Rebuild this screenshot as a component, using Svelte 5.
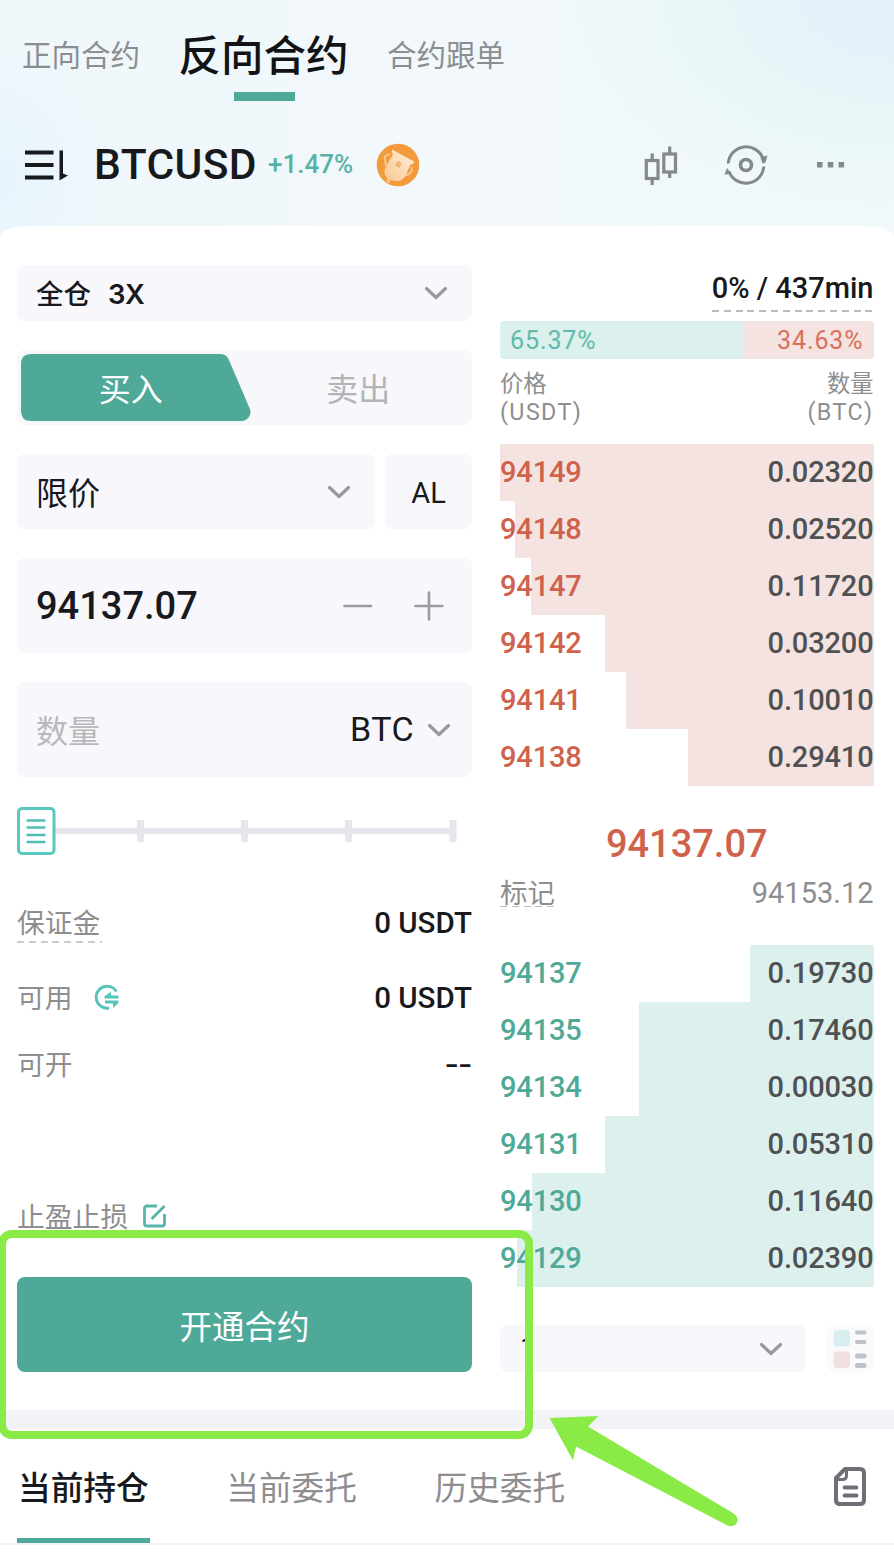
<script lang="ts">
  type Level = { price: string; amount: string; depth: number };

  // depth is the width of the volume bar, in percent of the book
  const asks: Level[] = [
    { price: '94149', amount: '0.02320', depth: 100 },
    { price: '94148', amount: '0.02520', depth: 95.9 },
    { price: '94147', amount: '0.11720', depth: 91.7 },
    { price: '94142', amount: '0.03200', depth: 71.9 },
    { price: '94141', amount: '0.10010', depth: 66.4 },
    { price: '94138', amount: '0.29410', depth: 49.7 }
  ];

  const bids: Level[] = [
    { price: '94137', amount: '0.19730', depth: 33.2 },
    { price: '94135', amount: '0.17460', depth: 62.8 },
    { price: '94134', amount: '0.00030', depth: 62.8 },
    { price: '94131', amount: '0.05310', depth: 71.9 },
    { price: '94130', amount: '0.11640', depth: 91.5 },
    { price: '94129', amount: '0.02390', depth: 95.4 }
  ];

  const markets = ['正向合约', '反向合约', '合约跟单'];
  const positionTabs = ['当前持仓', '当前委托', '历史委托'];

  let market = $state('反向合约');
  let side = $state<'buy' | 'sell'>('buy');
  let positionTab = $state('当前持仓');
</script>

{#snippet chevron()}
  <svg class="chevron" width="24" height="14" viewBox="0 0 24 14">
    <path d="M2.500 2.500 L12 11.500 L21.500 2.500" fill="none" stroke="#98989d" stroke-width="3.200" stroke-linecap="round" stroke-linejoin="round" />
  </svg>
{/snippet}

{#snippet levels(rows: Level[], kind: string)}
  <div class="levels {kind}">
    {#each rows as row (row.price)}
      <div class="level">
        <div class="depth" style="width: {row.depth}%"></div>
        <span class="price">{row.price}</span>
        <span class="amount">{row.amount}</span>
      </div>
    {/each}
  </div>
{/snippet}

<div class="app">
  <header>
    <nav class="markets">
      {#each markets as m (m)}
        <button class="market" class:active={market === m} onclick={() => (market = m)}>{m}</button>
      {/each}
    </nav>

    <div class="pair-row">
      <svg class="menu-icon" width="46" height="34" viewBox="0 0 46 34">
        <path d="M3 4.500H31.500M3 17H31.500M3 29.500H31.500" stroke="#17191c" stroke-width="3.800" />
        <path d="M37.500 2.500H41V25.500L46 27.500L37.500 32.500Z" fill="#17191c" />
      </svg>
      <span class="pair">BTCUSD</span>
      <span class="change">+1.47%</span>
      <svg class="cup" width="44" height="44" viewBox="0 0 44 44">
        <defs>
          <linearGradient id="cup-fill" x1="0" y1="1" x2="1" y2="0">
            <stop offset="0" stop-color="#f6c68e" />
            <stop offset="1" stop-color="#fff1dd" />
          </linearGradient>
        </defs>
        <circle cx="22" cy="22" r="21.300" fill="#f29b3c" />
        <path d="M14 11.500C9.500 11.500 8 14 9 17.500C9.500 19.500 10.500 20.500 9.500 23" fill="none" stroke="#f9c893" stroke-width="2" />
        <path d="M35 24C37 26 35.500 30 32 31.500C30 32.400 28.500 31.500 28 33" fill="none" stroke="#f9c893" stroke-width="2" />
        <path d="M16 6.500L38 18.500Q38 21 34.500 21.500L31 29.500C29.500 35 25 38.500 20 38L14 37L13 40.500L10.500 38.500L11.500 35C7.500 31.500 8 27 10 23.500L17 11.500Q15 9.500 16 6.500Z" fill="url(#cup-fill)" />
        <path d="M22 17.500L26 20.500L23.500 25L19 22Z" fill="#f0b578" />
      </svg>

      <div class="tools">
        <svg width="36" height="42" viewBox="0 0 36 42">
          <g fill="none" stroke="#84888b" stroke-width="3.200">
            <rect x="3.300" y="16.500" width="11.700" height="18" />
            <path d="M9.200 9.500V16.500M9.200 34.500V41" />
            <rect x="20.800" y="10" width="11.700" height="18" />
            <path d="M26.700 2.500V10M26.700 28V34" />
          </g>
        </svg>
        <svg class="cycle" width="46" height="42" viewBox="0 0 46 42">
          <g fill="none" stroke="#84888b" stroke-width="3">
            <circle cx="23" cy="21" r="5.500" stroke-width="3.600" />
            <path d="M5.200 19.500A18 18 0 0 1 40 14.500" />
            <path d="M40.800 22.500A18 18 0 0 1 6 27.500" />
          </g>
          <path d="M37.500 13.500L44.500 11.500L42.500 18.500L39.500 19.500Z" fill="#84888b" />
          <path d="M1.500 30.500L4 24L8.500 30Z" fill="#84888b" />
        </svg>
        <svg width="30" height="8" viewBox="0 0 30 8">
          <path d="M1 1H6.500V6.500H1ZM11.800 1H17.300V6.500H11.800ZM22.600 1H28.100V6.500H22.600Z" fill="#84888b" />
        </svg>
      </div>
    </div>
  </header>

  <main>
    <section class="order">
      <button class="field leverage"><span>全仓</span><span class="times">3X</span>{@render chevron()}</button>

      <div class="sides">
        <svg class="side-shape" width="231" height="67" viewBox="0 0 231 67">
          <path d="M10 0H199Q205 0 207.500 5L228.500 54Q230.500 58 228.500 62Q226 67 220 67H10Q0 67 0 57V10Q0 0 10 0Z" fill="#4fa998" />
        </svg>
        <button class="side" class:on={side === 'buy'} onclick={() => (side = 'buy')}>买入</button>
        <button class="side" class:on={side === 'sell'} onclick={() => (side = 'sell')}>卖出</button>
      </div>

      <div class="type-row">
        <button class="field type">限价{@render chevron()}</button>
        <button class="field al">AL</button>
      </div>

      <div class="field price-input">
        <span class="value">94137.07</span>
        <svg width="102" height="30" viewBox="0 0 102 30">
          <path d="M2.500 15H29M87 1.500V28.500M73.500 15H100.500" stroke="#9a9a9f" stroke-width="2.600" stroke-linecap="round" />
        </svg>
      </div>

      <div class="field amount-input">
        <span class="placeholder">数量</span>
        <span class="unit">BTC</span>
        {@render chevron()}
      </div>

      <svg class="slider" width="455" height="50" viewBox="0 0 455 50">
        <path d="M38 25H439" stroke="#e6e6ec" stroke-width="6.500" />
        <path d="M123.500 14V36M227.500 14V36M331.500 14V36M436 14V36" stroke="#e6e6ec" stroke-width="7" />
        <rect x="1.500" y="2.500" width="35.500" height="45" rx="3.500" fill="#fff" stroke="#5ac7be" stroke-width="3" />
        <path d="M9.500 14.500H28.500M9.500 21.500H28.500M9.500 29H28.500M9.500 36H28.500" stroke="#4fc0b6" stroke-width="2.600" />
      </svg>

      <div class="info margin"><span class="dashed">保证金</span><b>0 USDT</b></div>
      <div class="info">
        <span>可用</span>
        <svg width="28" height="28" viewBox="0 0 28 28">
          <path d="M23.500 8.500A11 11 0 1 0 16 25" fill="none" stroke="#54c5bb" stroke-width="3" />
          <path d="M25.500 12.500H18V9L11 13.500L12 15.500H25.500ZM12 17.500H25.500V20L20 25V20.500H12Z" fill="#54c5bb" />
        </svg>
        <b>0 USDT</b>
      </div>
      <div class="info open"><span>可开</span><b class="empty">--</b></div>

      <div class="info stop">
        <span>止盈止损</span>
        <svg width="26" height="26" viewBox="0 0 26 26">
          <path d="M15 3H5Q2.500 3 2.500 5.500V20.500Q2.500 23 5 23H20Q22.500 23 22.500 20.500V11" fill="none" stroke="#56b5a9" stroke-width="2.800" />
          <path d="M9.500 16L22.500 3" stroke="#56b5a9" stroke-width="2.800" />
        </svg>
      </div>

      <button class="submit">开通合约</button>
    </section>

    <section class="book">
      <div class="funding"><span>0% / 437min</span></div>
      <div class="ratio">
        <span class="long">65.37%</span>
        <span class="short">34.63%</span>
      </div>
      <div class="book-head">
        <div>价格<br /><span>(USDT)</span></div>
        <div>数量<br /><span>(BTC)</span></div>
      </div>

      {@render levels(asks, 'asks')}

      <div class="last">94137.07</div>
      <div class="mark"><span>标记</span><span class="mark-price">94153.12</span></div>

      {@render levels(bids, 'bids')}

      <div class="book-foot">
        <button class="field step">1{@render chevron()}</button>
        <svg width="47" height="47" viewBox="0 0 47 47">
          <rect width="47" height="47" rx="8" fill="#fafafc" />
          <rect x="6.500" y="5" width="16.500" height="16.500" rx="4" fill="#d7eff0" />
          <rect x="6.500" y="26.500" width="16.500" height="16.500" rx="4" fill="#f1dfe1" />
          <g stroke="#c0c0c8" stroke-linecap="round">
            <path d="M30 7.500H37.500M30 17H37.500" stroke-width="4" />
            <path d="M30.500 31H37M30.500 40.500H37" stroke-width="5" />
          </g>
        </svg>
      </div>
    </section>
  </main>

  <div class="divider"></div>

  <nav class="positions">
    {#each positionTabs as tab (tab)}
      <button class="tab" class:active={positionTab === tab} onclick={() => (positionTab = tab)}>{tab}</button>
    {/each}
    <svg width="34" height="42" viewBox="0 0 34 42">
      <g fill="none" stroke="#6f6f78" stroke-width="4" stroke-linejoin="round">
        <path d="M12 4H27Q31 4 31 8V35Q31 39 27 39H7Q3 39 3 35V13Z" />
        <path d="M4 14.500H9.500Q13.500 14.500 13.500 10.500V5" stroke-width="3" />
        <path d="M11.500 22.500H23.500M11.500 30.500H23.500" stroke-linecap="round" stroke-width="3.800" />
      </g>
    </svg>
  </nav>

  <!-- guide marking the activation button -->
  <div class="guide-frame"></div>
  <svg class="guide-arrow" width="192" height="114" viewBox="0 0 192 114">
    <path d="M0.500 4L49.500 2L39 12.500L185.500 100Q190.500 104.500 187.500 109Q184.500 114 178.500 111.500L27 32.500L24 46.500Z" fill="#8aeb46" />
  </svg>
</div>

<style>
  :global(body) { background: #fff; }

  .app {
    --latin: Roboto, 'Noto Sans CJK SC', sans-serif;
    position: relative;
    width: 894px;
    height: 1562px;
    overflow: hidden;
    background: #fff;
    color: #17191c;
    font-family: 'Noto Sans CJK SC', sans-serif;
    font-size: 29px;
    line-height: 1.2;
  }

  button {
    border: 0;
    padding: 0;
    margin: 0;
    background: none;
    color: inherit;
    font: inherit;
    text-align: left;
  }

  svg { display: block; flex: none; }

  header {
    box-sizing: border-box;
    height: 238px;
    padding: 0 22px;
    background:
      radial-gradient(ellipse 330px 210px at 100% 0, #e3f2fa 20%, #e8f6f7 55%, rgba(240, 248, 250, 0) 100%),
      radial-gradient(ellipse 120px 150px at 0 75%, #e8f4fc 10%, rgba(240, 247, 251, 0) 100%),
      linear-gradient(90deg, #eff7fa, #f2f8fb 50%, #f0f8fb);
  }

  .markets {
    display: flex;
    align-items: center;
    height: 108px;
    gap: 38.500px;
  }

  .market {
    font-size: 29.500px;
    color: #8a8e91;
    white-space: nowrap;
  }

  .market.active {
    display: flex;
    flex-direction: column;
    align-items: center;
    margin-top: -3px;
    font-size: 42.500px;
    font-weight: 500;
    color: #111315;
  }

  .market.active::after {
    content: '';
    width: 61px;
    height: 8.500px;
    margin: 14px 0 -22.500px 1px;
    background: #4fa998;
  }

  .pair-row {
    display: flex;
    align-items: center;
    height: 114px;
    font-family: var(--latin);
  }

  .pair {
    margin: -2px 0 0 26px;
    font-size: 42.500px;
    font-weight: 500;
    letter-spacing: 0.4px;
  }

  .change {
    margin-left: 11px;
    font-size: 26px;
    font-weight: 500;
    color: #56b3a4;
  }

  .cup { margin-left: 23px; }

  .tools {
    display: flex;
    align-items: center;
    margin-left: auto;
    padding-right: 26px;
  }

  .cycle { margin: 0 47px 0 44px; }

  main {
    box-sizing: border-box;
    display: flex;
    justify-content: space-between;
    height: 1184px;
    margin-top: -12px;
    padding: 39px 20.500px 0 17px;
    background: #fff;
    border-radius: 30px 30px 0 0 / 10px 10px 0 0;
  }

  .order {
    display: flex;
    flex-direction: column;
    width: 455px;
  }

  .field {
    box-sizing: border-box;
    display: flex;
    align-items: center;
    border-radius: 8px;
    background: #f7f7fc;
  }

  .chevron { margin-left: auto; }

  .leverage {
    height: 56px;
    padding: 0 24px 0 19px;
    font-size: 27.500px;
    font-weight: 500;
  }

  .leverage span:first-child { margin-top: -1px; }

  .times {
    margin: 2px 0 0 17px;
    font-family: Inter, sans-serif;
    font-size: 27.500px;
    font-weight: 600;
  }

  .sides {
    position: relative;
    display: flex;
    height: 75px;
    margin-top: 29px;
    border-radius: 8px;
    background: #f7f7fc;
  }

  .side-shape { position: absolute; left: 4px; top: 4px; }

  .side {
    position: relative;
    flex: 1;
    text-align: center;
    font-size: 32px;
    color: #b4b4b7;
  }

  .side.on { color: #fff; }

  .type-row {
    display: flex;
    gap: 10px;
    height: 75px;
    margin-top: 29px;
  }

  .type {
    flex: 1;
    padding: 0 24px 0 19px;
    font-size: 32px;
  }

  .al {
    justify-content: center;
    width: 87px;
    padding-top: 3px;
    font-family: var(--latin);
    font-size: 29px;
  }

  .price-input {
    justify-content: space-between;
    height: 95px;
    margin-top: 29px;
    padding: 0 28px 0 19px;
    font-family: var(--latin);
  }

  .value { margin-top: 3px; font-size: 38px; font-weight: 500; }

  .amount-input {
    height: 95px;
    margin-top: 29px;
    padding: 0 21px 0 19px;
  }

  .amount-input .chevron { margin-left: 13px; }
  .placeholder { font-size: 32px; color: #b9b9bc; }

  .unit {
    margin-left: auto;
    font-family: var(--latin);
    font-size: 34px;
    letter-spacing: 0.4px;
  }

  .slider { margin-top: 29px; }

  .info {
    display: flex;
    align-items: center;
    height: 40px;
    margin-top: 35px;
    font-size: 27.800px;
    color: #8e8e90;
  }

  .info.margin { margin-top: 46px; }
  .info.open { margin-top: 27px; }
  .info.stop { margin-top: 112px; }
  .info svg { margin-left: 20px; }
  .info.stop svg { margin-left: 14px; }

  .info b {
    margin-left: auto;
    padding-top: 3px;
    font-family: var(--latin);
    font-size: 29.500px;
    font-weight: 500;
    color: #17191c;
  }

  .info .empty { transform: scaleX(1.35); transform-origin: right; }

  .dashed {
    width: 85px;
    height: 42px;
    line-height: 40px;
    background: repeating-linear-gradient(90deg, #ccc 0 7px, transparent 7px 11.800px) 0 100% / 100% 2px no-repeat;
  }

  .submit {
    height: 95px;
    margin-top: 41px;
    border-radius: 8px;
    background: #4fa998;
    color: #fff;
    font-size: 32.500px;
    text-align: center;
  }

  .book {
    display: flex;
    flex-direction: column;
    width: 373.500px;
    font-family: var(--latin);
  }

  .funding {
    display: flex;
    justify-content: flex-end;
    height: 47px;
    font-size: 29px;
    font-weight: 500;
  }

  .funding span {
    height: 47px;
    line-height: 46px;
    background: repeating-linear-gradient(90deg, #bbb 0 7px, transparent 7px 11.800px) 0 100% / 100% 2px no-repeat;
  }

  .ratio {
    display: flex;
    height: 38px;
    margin-top: 9px;
    border-radius: 4px;
    overflow: hidden;
    font-size: 25px;
    line-height: 40px;
    letter-spacing: 0.9px;
  }

  .long {
    width: 65.37%;
    padding-left: 10px;
    box-sizing: border-box;
    background: #dcf0ed;
    color: #5fbaac;
  }

  .short {
    flex: 1;
    padding-right: 10px;
    text-align: right;
    background: #f4e3e0;
    color: #d8705c;
  }

  .book-head {
    display: flex;
    justify-content: space-between;
    height: 85px;
    padding-top: 11px;
    box-sizing: border-box;
    font-size: 23.300px;
    line-height: 28px;
    color: #8e8e90;
  }

  .book-head span { letter-spacing: 1.400px; }
  .book-head div:last-child { text-align: right; }

  .level {
    position: relative;
    display: flex;
    justify-content: space-between;
    height: 57px;
    font-size: 29px;
    font-weight: 500;
    line-height: 57px;
    letter-spacing: -0.150px;
    color: #505153;
  }

  /* volume bar runs behind the figures */
  .depth {
    position: absolute;
    top: 0;
    right: 0;
    height: 57px;
  }

  .level span { position: relative; }
  .asks .depth { background: #f4e3e0; }
  .bids .depth { background: #dcf0ed; }
  .asks .price { color: #cf624c; }
  .bids .price { color: #4fa998; }

  .last {
    margin-top: 34px;
    height: 48px;
    font-size: 38px;
    font-weight: 500;
    line-height: 48px;
    text-align: center;
    color: #cf624c;
  }

  .mark {
    display: flex;
    justify-content: space-between;
    align-items: center;
    height: 40px;
    margin: 4px 0 33px;
    font-size: 27.500px;
    color: #8e8e90;
  }

  .mark span:first-child {
    height: 30px;
    line-height: 34px;
    background: repeating-linear-gradient(90deg, #bbb 0 7px, transparent 7px 11.800px) 0 100% / 100% 1.500px no-repeat;
  }

  .mark-price { padding-top: 2px; font-size: 29px; }

  .book-foot {
    display: flex;
    justify-content: space-between;
    margin-top: 38px;
  }

  .step {
    width: 306px;
    height: 47px;
    padding: 0 23px 0 20px;
    font-family: var(--latin);
    line-height: 47px;
  }

  .divider { height: 19px; background: #f2f2f7; }

  .positions {
    display: flex;
    align-items: center;
    height: 114px;
    padding: 0 27px 0 17px;
    border-bottom: 2px solid #f0f0f6;
  }

  .tab {
    box-sizing: border-box;
    height: 114px;
    margin-right: 75.500px;
    padding: 4px 1px 0;
    border-bottom: 5px solid transparent;
    font-size: 32.700px;
    color: #8e8e90;
    white-space: nowrap;
  }

  .tab.active {
    border-color: #4fa998;
    font-weight: 500;
    color: #17191c;
  }

  .positions svg { margin-left: auto; }

  .guide-frame {
    position: absolute;
    box-sizing: border-box;
    left: -2px;
    top: 1230px;
    width: 534.500px;
    height: 209px;
    border: 8px solid #8aeb46;
    border-radius: 14px;
  }

  .guide-arrow { position: absolute; left: 549px; top: 1414px; }
</style>
